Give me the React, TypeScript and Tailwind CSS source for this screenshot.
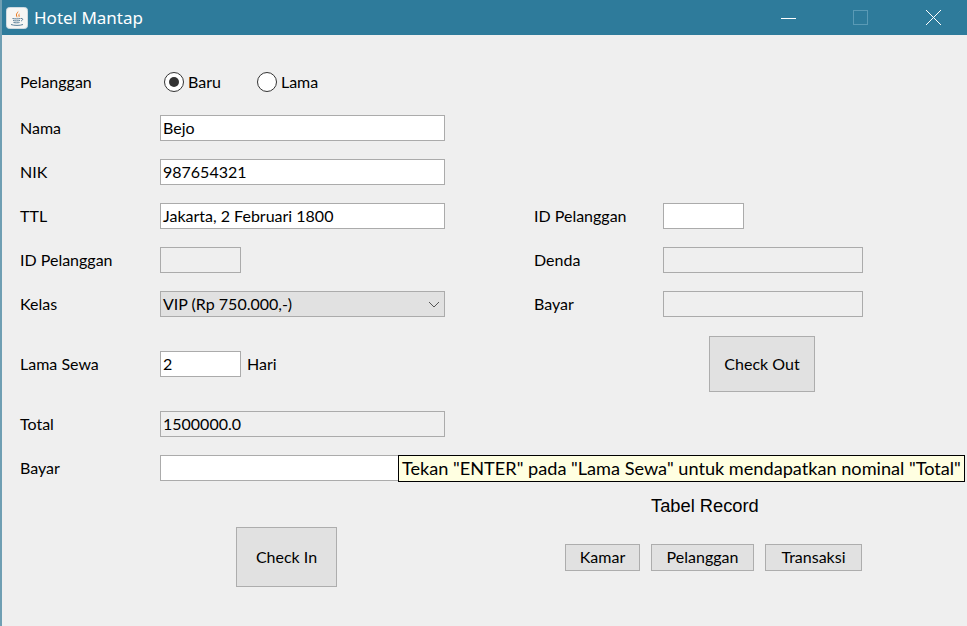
import type { ReactNode } from 'react';

const field = 'h-[26px] border border-[#ababab] px-[2px] flex items-center text-[16px] text-black';
const btn = 'bg-[#e1e1e1] border border-[#adadad] text-[16px] text-black pb-px';

function Label({ children, w = 'w-[140px]' }: { children: ReactNode; w?: string }) {
  return <div className={`${w} shrink-0 text-[16px] text-black`}>{children}</div>;
}

function Radio({ label, checked }: { label: string; checked?: boolean }) {
  return (
    <div className="flex items-center gap-[4px]">
      <div className="w-[20px] h-[20px] rounded-full border border-[#333] bg-white flex items-center justify-center">
        {checked && <div className="w-[10px] h-[10px] rounded-full bg-[#333]" />}
      </div>
      <span className="text-[16px] text-black">{label}</span>
    </div>
  );
}

function JavaIcon() {
  return (
    <svg width="22" height="22" viewBox="0 0 22 22">
      <rect x="0.5" y="0.5" width="21" height="21" rx="3" fill="#f6f6f4" stroke="#cfdae0" />
      <path d="M12 3c1 2-2.500 3-2 5.500.2 1 1 1.500 1 2.500 1-1.500-.5-2.500 0-4C11.500 6 13 5 12 3z" fill="#e8791e" />
      <path d="M14 6c-1 1-2 1.500-1.500 3 .2.600.5 1 .3 1.500 1-.7 1-1.800.6-2.600C13.100 7.200 13.600 6.800 14 6z" fill="#e8791e" />
      <path d="M6.500 11.500c2 .5 6 .5 8 0M7 13.500c2 .5 5 .5 7 0M7.500 15.500c2 .4 4.500.4 6 0" stroke="#5a7f98" strokeWidth="1" fill="none" />
      <path d="M15 11.500c2-.5 2.500 1.500 0 2.500" stroke="#5a7f98" strokeWidth="1" fill="none" />
      <path d="M5 17.500c3 1.200 9 1.200 12 0" stroke="#5a7f98" strokeWidth="1" fill="none" />
    </svg>
  );
}

export default function App() {
  return (
    <div className="relative w-[967px] h-[626px] overflow-hidden bg-[#efefef] font-['Lato','Noto_Sans',sans-serif]">
      <div className="h-[35px] bg-[#2e7b9b] flex items-center pl-[6px] text-white">
        <JavaIcon />
        <span className="ml-[6px] text-[17px] leading-none font-['Noto_Sans',sans-serif]">Hotel Mantap</span>
        <div className="ml-auto flex items-center">
          <svg width="16" height="16" viewBox="0 0 16 16" className="mr-[56px]">
            <path d="M0 8.500h15" stroke="#fff" />
          </svg>
          <svg width="16" height="16" viewBox="0 0 16 16" className="mr-[56px]">
            <rect x="0.500" y="0.500" width="14" height="14" fill="none" stroke="#5a9ab5" />
          </svg>
          <svg width="17" height="17" viewBox="0 0 17 17" className="mr-[25px]">
            <path d="M1 1l15 15M16 1L1 16" stroke="#fff" />
          </svg>
        </div>
      </div>

      <div className="flex pl-5 pt-[34px]">
        <div className="w-[514px] shrink-0 flex flex-col">
          <div className="h-[26px] flex items-center mb-5">
            <Label w="w-[144px]">Pelanggan</Label>
            <div className="flex items-center gap-[36px]">
              <Radio label="Baru" checked />
              <Radio label="Lama" />
            </div>
          </div>
          <div className="flex items-center mb-[18px]">
            <Label>Nama</Label>
            <div className={`${field} w-[285px] bg-white`}>Bejo</div>
          </div>
          <div className="flex items-center mb-[18px]">
            <Label>NIK</Label>
            <div className={`${field} w-[285px] bg-white`}>987654321</div>
          </div>
          <div className="flex items-center mb-[18px]">
            <Label>TTL</Label>
            <div className={`${field} w-[285px] bg-white`}>Jakarta, 2 Februari 1800</div>
          </div>
          <div className="flex items-center mb-[18px]">
            <Label>ID Pelanggan</Label>
            <div className={`${field} w-[81px]`} />
          </div>
          <div className="flex items-center mb-[34px]">
            <Label>Kelas</Label>
            <div className={`${field} w-[285px] bg-[#e1e1e1] justify-between`}>
              <span>VIP (Rp 750.000,-)</span>
              <svg width="12" height="7" viewBox="0 0 12 7" className="mr-[2px]">
                <path d="M1 1l5 5 5-5" stroke="#555" fill="none" />
              </svg>
            </div>
          </div>
          <div className="flex items-center mb-[34px]">
            <Label>Lama Sewa</Label>
            <div className={`${field} w-[81px] bg-white`}>2</div>
            <span className="ml-[6px] text-[16px] text-black">Hari</span>
          </div>
          <div className="flex items-center mb-[18px]">
            <Label>Total</Label>
            <div className={`${field} w-[285px]`}>1500000.0</div>
          </div>
          <div className="flex items-center mb-[46px]">
            <Label>Bayar</Label>
            <div className={`${field} w-[285px] bg-white`} />
          </div>
          <button className={`${btn} ml-[216px] w-[101px] h-[60px]`}>Check In</button>
        </div>

        <div className="w-[330px] flex flex-col pt-[134px]">
          <div className="flex items-center mb-[18px]">
            <Label w="w-[129px]">ID Pelanggan</Label>
            <div className={`${field} w-[81px] bg-white`} />
          </div>
          <div className="flex items-center mb-[18px]">
            <Label w="w-[129px]">Denda</Label>
            <div className={`${field} w-[200px]`} />
          </div>
          <div className="flex items-center mb-[19px]">
            <Label w="w-[129px]">Bayar</Label>
            <div className={`${field} w-[200px]`} />
          </div>
          <button className={`${btn} ml-[175px] w-[106px] h-[56px]`}>Check Out</button>
          <div className="ml-[117px] mt-[104px] font-['Liberation_Sans',sans-serif] text-[18.3px] leading-[20px] text-black">
            Tabel Record
          </div>
          <div className="ml-[31px] mt-[28px] flex gap-[11px]">
            <button className={`${btn} w-[75px] h-[27px]`}>Kamar</button>
            <button className={`${btn} w-[103px] h-[27px]`}>Pelanggan</button>
            <button className={`${btn} w-[97px] h-[27px]`}>Transaksi</button>
          </div>
        </div>
      </div>

      {/* window frame edge */}
      <div className="absolute left-0 top-0 bottom-0 w-[2px] bg-[#6f9fb3]" />

      {/* tooltip over the Bayar field */}
      <div className="absolute left-[398px] top-[455px] w-[567px] h-[27px] bg-[#ffffe1] border border-black pl-[3px] flex items-center text-[18.15px] text-black whitespace-nowrap">
        Tekan "ENTER" pada "Lama Sewa" untuk mendapatkan nominal "Total"
      </div>
    </div>
  );
}
